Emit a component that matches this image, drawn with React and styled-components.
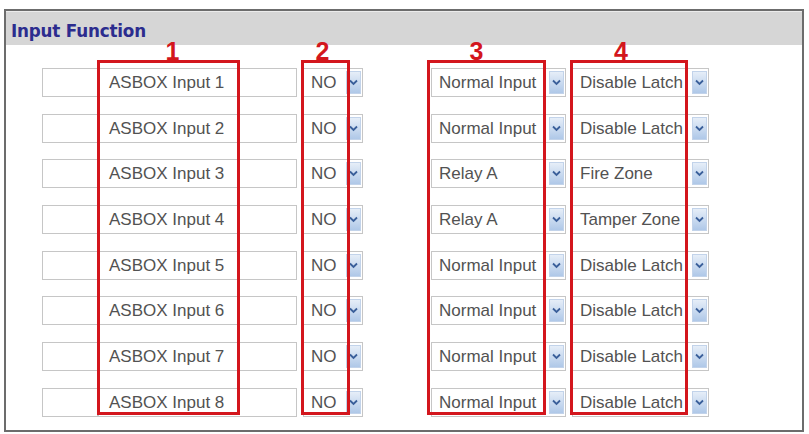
import React from "react";
import styled, { createGlobalStyle } from "styled-components";

const GlobalStyle = createGlobalStyle`
  html, body {
    margin: 0;
    padding: 0;
    background: #ffffff;
  }
  body {
    font-family: "Liberation Sans", Arial, sans-serif;
  }
`;

const Page = styled.div`
  padding: 9px 0 0 4px;
`;

const Frame = styled.section`
  position: relative;
  box-sizing: border-box;
  width: 800px;
  height: 423px;
  border: 2px solid #6c6c6c;
  background: #ffffff;
`;

const Header = styled.h2`
  margin: 0;
  height: 34px;
  box-sizing: border-box;
  padding: 8px 0 0 5px;
  background: #d6d6d6;
  border-top: 1px solid #ececec;
  font-family: "DejaVu Sans", Verdana, sans-serif;
  font-weight: bold;
  font-size: 16.8px;
  line-height: 22px;
  letter-spacing: -0.2px;
  color: #2c2c8e;
`;

const Rows = styled.div`
  display: flex;
  flex-direction: column;
  gap: 16.7px;
  padding: 23px 0 0 36px;
`;

const Row = styled.div`
  display: flex;
  align-items: stretch;
  height: 29px;
`;

const TextField = styled.div`
  box-sizing: border-box;
  flex: 0 0 ${(p) => p.$w}px;
  height: 29px;
  border: 1px solid #c6c6c6;
  background: #ffffff;
  padding-left: 10px;
  font-size: 17px;
  line-height: 27px;
  color: #525252;
  white-space: nowrap;
  overflow: hidden;
`;

const SelectBox = styled.div`
  box-sizing: border-box;
  display: flex;
  align-items: stretch;
  flex: 0 0 ${(p) => p.$w}px;
  margin-left: ${(p) => p.$gap}px;
  height: 29px;
  border: 1px solid #c6c6c6;
  background: #ffffff;
`;

const SelectValue = styled.span`
  flex: 1;
  min-width: 0;
  padding-left: ${(p) => p.$pad}px;
  font-size: 17px;
  line-height: 27px;
  color: #525252;
  white-space: nowrap;
  overflow: hidden;
`;

const ArrowButton = styled.span`
  flex: 0 0 15px;
  display: flex;
  align-items: center;
  justify-content: center;
  margin: 2px 1px 2px 2px;
  background: linear-gradient(#e6eef8, #afc8e8);
  border: 1px solid #c2d3ea;
  box-sizing: border-box;
`;

const Annotation = styled.div`
  position: absolute;
  left: ${(p) => p.$left}px;
  top: 49px;
  width: ${(p) => p.$width}px;
  height: 355px;
  box-sizing: border-box;
  border: 3px solid #d3161d;
  pointer-events: none;
`;

const AnnotationNumber = styled.span`
  position: absolute;
  bottom: 100%;
  left: 50%;
  margin-left: ${(p) => p.$shift}px;
  margin-bottom: -1px;
  transform: translateX(-50%);
  font-family: "Liberation Sans", Arial, sans-serif;
  font-weight: bold;
  font-size: 25px;
  line-height: 1;
  color: #d3161d;
`;

function Chevron() {
  return (
    <svg width="9" height="7" viewBox="0 0 9 7" aria-hidden="true">
      <path d="M1 1.5 L4.5 5 L8 1.5" fill="none" stroke="#3a5f9a" strokeWidth="1.8" />
    </svg>
  );
}

function Select({ value, width, gap, pad = 6 }) {
  return (
    <SelectBox $w={width} $gap={gap}>
      <SelectValue $pad={pad}>{value}</SelectValue>
      <ArrowButton>
        <Chevron />
      </ArrowButton>
    </SelectBox>
  );
}

const inputs = [
  { mode: "Normal Input", latch: "Disable Latch" },
  { mode: "Normal Input", latch: "Disable Latch" },
  { mode: "Relay A", latch: "Fire Zone" },
  { mode: "Relay A", latch: "Tamper Zone" },
  { mode: "Normal Input", latch: "Disable Latch" },
  { mode: "Normal Input", latch: "Disable Latch" },
  { mode: "Normal Input", latch: "Disable Latch" },
  { mode: "Normal Input", latch: "Disable Latch" },
];

const callouts = [
  { n: 1, left: 91, width: 143, shift: 4 },
  { n: 2, left: 295, width: 49, shift: -3 },
  { n: 3, left: 421, width: 119, shift: -10 },
  { n: 4, left: 564, width: 118, shift: -8 },
];

export default function App() {
  return (
    <>
      <GlobalStyle />
      <Page>
        <Frame>
          <Header>Input Function</Header>
          <Rows>
            {inputs.map((row, i) => (
              <Row key={i}>
                <TextField $w={56} />
                <TextField $w={199}>ASBOX Input {i + 1}</TextField>
                <Select value="NO" width={60} gap={6} pad={7} />
                <Select value={row.mode} width={135} gap={68} pad={7} />
                <Select value={row.latch} width={137} gap={6} pad={7} />
              </Row>
            ))}
          </Rows>
          {callouts.map((c) => (
            <Annotation key={c.n} $left={c.left} $width={c.width}>
              <AnnotationNumber $shift={c.shift}>{c.n}</AnnotationNumber>
            </Annotation>
          ))}
        </Frame>
      </Page>
    </>
  );
}
